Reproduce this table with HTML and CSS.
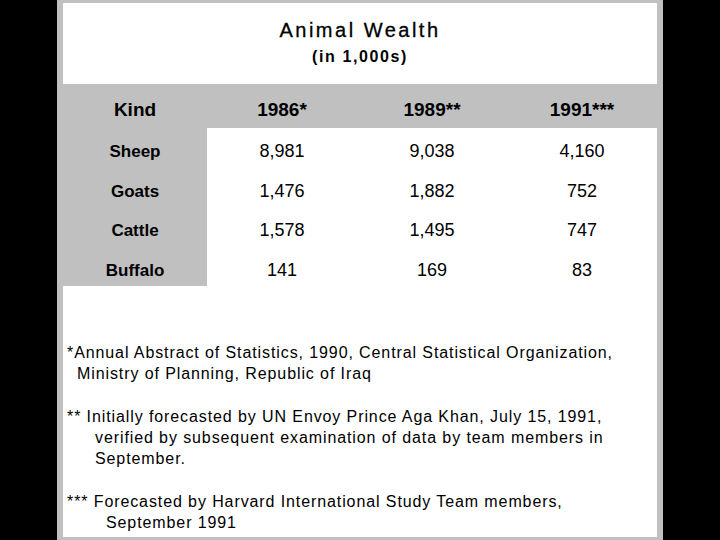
FILE: index.html
```html
<!DOCTYPE html>
<html>
<head>
<meta charset="utf-8">
<link rel="stylesheet" href="styles.css">
</head>
<body>
<div class="panel">
  <div class="title-block">
    <div class="title">Animal Wealth</div>
    <div class="subtitle">(in 1,000s)</div>
  </div>
  <div class="table">
    <div class="hd kind">Kind</div>
    <div class="hd">1986*</div>
    <div class="hd">1989**</div>
    <div class="hd">1991***</div>

    <div class="label">Sheep</div>
    <div class="val">8,981</div>
    <div class="val">9,038</div>
    <div class="val">4,160</div>

    <div class="label">Goats</div>
    <div class="val">1,476</div>
    <div class="val">1,882</div>
    <div class="val">752</div>

    <div class="label">Cattle</div>
    <div class="val">1,578</div>
    <div class="val">1,495</div>
    <div class="val">747</div>

    <div class="label">Buffalo</div>
    <div class="val">141</div>
    <div class="val">169</div>
    <div class="val">83</div>
  </div>
  <div class="notes">
    <div class="note">
      <span class="line">*Annual Abstract of Statistics, 1990, Central Statistical Organization,</span>
      <span class="line cont1">Ministry of Planning, Republic of Iraq</span>
    </div>
    <div class="note">
      <span class="line">** Initially forecasted by UN Envoy Prince Aga Khan, July 15, 1991,</span>
      <span class="line cont2">verified by subsequent examination of data by team members in</span>
      <span class="line cont2">September.</span>
    </div>
    <div class="note">
      <span class="line">*** Forecasted by Harvard International Study Team members,</span>
      <span class="line cont3">September 1991</span>
    </div>
  </div>
</div>
</body>
</html>
```

FILE: styles.css
```css
html, body {
  margin: 0;
  padding: 0;
  background: #000;
}

body {
  width: 720px;
  height: 540px;
  overflow: hidden;
  font-family: "Liberation Sans", Arial, sans-serif;
  color: #000;
}

.panel {
  box-sizing: border-box;
  width: 606px;
  height: 540px;
  margin-left: 57px;
  padding: 3px 6px;
  background: #c0c0c0;
  display: flex;
  flex-direction: column;
}

.title-block {
  flex-shrink: 0;
  box-sizing: border-box;
  height: 81px;
  padding-top: 15px;
  background: #fff;
  text-align: center;
}

.title {
  font-size: 20px;
  line-height: 24px;
  letter-spacing: 2.5px;
  -webkit-text-stroke: 0.3px #000;
}

.subtitle {
  font-size: 16px;
  font-weight: bold;
  line-height: 29px;
  letter-spacing: 1.6px;
}

.table {
  flex-shrink: 0;
  display: grid;
  grid-template-columns: 144px repeat(3, 1fr);
  grid-template-rows: 44px repeat(4, 39.5px);
}

.hd {
  box-sizing: border-box;
  padding-top: 7px;
  font-size: 19px;
  line-height: 37px;
  font-weight: bold;
  text-align: center;
}

.label,
.val {
  box-sizing: border-box;
  padding-top: 8px;
  font-size: 18px;
  line-height: 31.5px;
  text-align: center;
}

.label {
  font-weight: bold;
  font-size: 17px;
}

.val {
  background: #fff;
}

.notes {
  flex: 1 1 auto;
  min-height: 0;
  overflow: hidden;
  box-sizing: border-box;
  padding: 56px 0 0 4px;
  background: #fff;
  font-size: 16px;
  line-height: 21.3px;
  letter-spacing: 0.9px;
}

.note {
  margin-bottom: 21.3px;
}

.line {
  display: block;
  white-space: nowrap;
}

.cont1 { padding-left: 10px; }
.cont2 { padding-left: 28px; }
.cont3 { padding-left: 39px; }
```
